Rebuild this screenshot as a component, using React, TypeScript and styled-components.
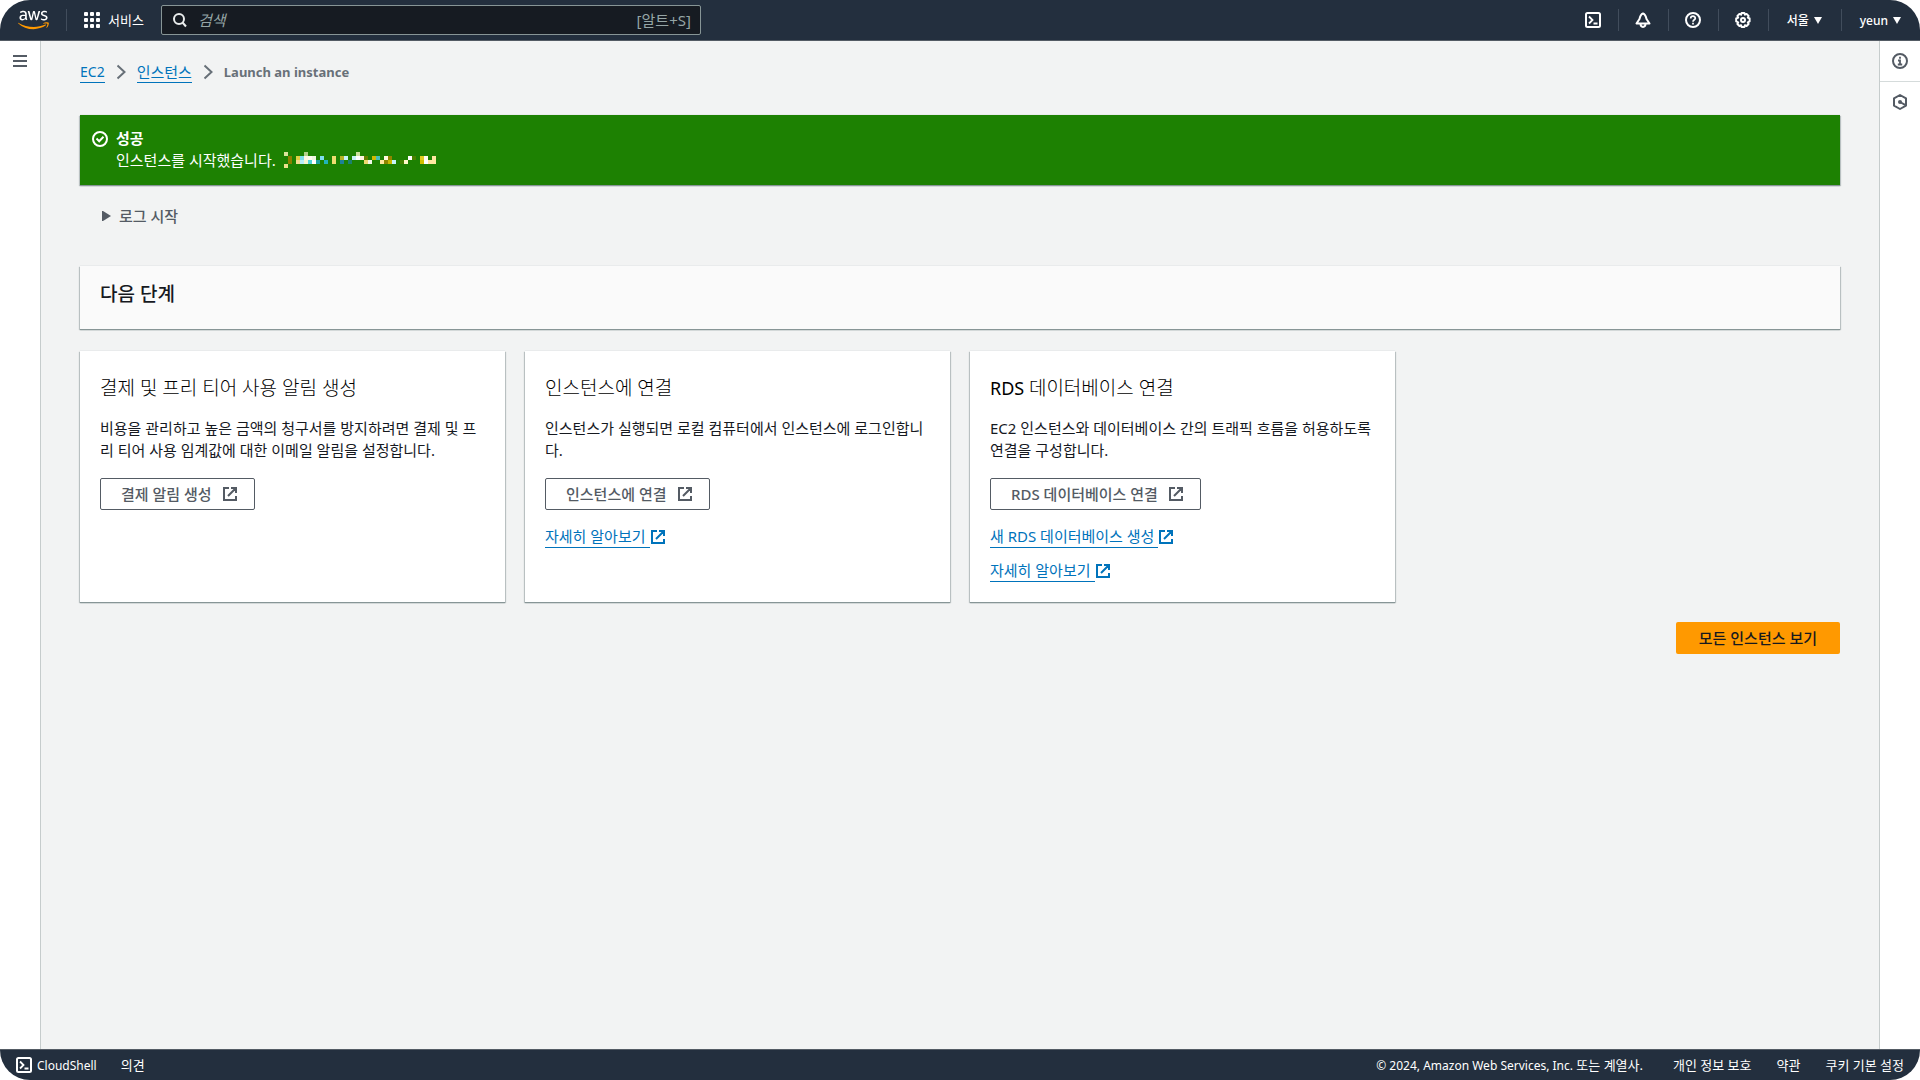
import React from "react";
import styled, { createGlobalStyle } from "styled-components";

const sans = '"Noto Sans", "Noto Sans CJK KR", sans-serif';

const GlobalStyle = createGlobalStyle`
  *, *::before, *::after { box-sizing: border-box; }
  body { margin: 0; background: #ffffff; }
  button, input { font-family: inherit; }
`;

const Shell = styled.div`
  min-height: 100vh;
  display: flex;
  flex-direction: column;
  overflow: hidden;
  border-radius: 30px;
  background: #ffffff;
  color: #16191f;
  font-family: ${sans};
  font-size: 15px;
  line-height: 22px;
`;

/* ---------- top bar ---------- */

const TopBar = styled.header`
  display: flex;
  align-items: center;
  height: 41px;
  background: #232f3e;
  border-bottom: 1px solid #545b64;
  color: #ffffff;
  font-size: 12px;
`;

const LogoLink = styled.a`
  display: flex;
  padding: 0 17px 0 18px;
`;

const Divider = styled.span`
  width: 1px;
  height: 22px;
  background: #414d5c;
`;

const ServicesButton = styled.button`
  display: flex;
  align-items: center;
  gap: 8px;
  padding: 0 17px;
  border: 0;
  background: none;
  color: #ffffff;
  font-size: 13px;
  line-height: 20px;
`;

const SearchBox = styled.label`
  display: flex;
  align-items: center;
  gap: 11px;
  flex: 0 1 540px;
  height: 30px;
  padding: 0 9px;
  border: 1px solid #879596;
  border-radius: 2px;
  background: #161b22;
  color: #95a5a6;
  font-size: 15px;
`;

const SearchInput = styled.input`
  flex: 1;
  min-width: 0;
  padding: 0;
  border: 0;
  outline: 0;
  background: none;
  color: #ffffff;
  font-size: 15px;
  &::placeholder {
    color: #95a5a6;
    font-style: italic;
    opacity: 1;
  }
`;

const TopTools = styled.nav`
  display: flex;
  align-items: center;
  margin-left: auto;
`;

const IconButton = styled.button`
  display: flex;
  align-items: center;
  justify-content: center;
  width: 49px;
  height: 40px;
  padding: 0;
  border: 0;
  background: none;
  color: #ffffff;
`;

const MenuButton = styled.button`
  display: flex;
  align-items: center;
  gap: 5px;
  height: 40px;
  padding: 0 19px 0 18px;
  border: 0;
  background: none;
  color: #ffffff;
  font-size: 12px;
  font-weight: 500;
`;

/* ---------- body ---------- */

const Body = styled.div`
  flex: 1;
  display: flex;
`;

const Rail = styled.aside<{ $side: "left" | "right" }>`
  display: flex;
  flex-direction: column;
  width: 41px;
  border: 0 solid #c6cccc;
  ${(p) => (p.$side === "left" ? "border-right-width: 1px;" : "border-left-width: 1px;")}
`;

const RailButton = styled.button<{ $ruled?: boolean }>`
  display: flex;
  align-items: center;
  justify-content: center;
  height: ${(p) => (p.$ruled ? "41px" : "40px")};
  padding: 0;
  border: 0;
  border-bottom: ${(p) => (p.$ruled ? "1px solid #d5dbdb" : "0")};
  background: none;
  color: #545b64;
`;

const Main = styled.main`
  flex: 1;
  min-width: 0;
  padding: 20px 39px;
  background: #f2f3f3;
`;

const Crumbs = styled.ol`
  display: flex;
  align-items: center;
  gap: 11px;
  margin: 0 0 32px;
  padding: 0;
  list-style: none;
`;

const Crumb = styled.li`
  display: flex;
  align-items: center;
  gap: 11px;
  color: #687078;
  font-size: 13px;
  font-weight: 700;
`;

const CrumbLink = styled.a<{ $latin?: boolean }>`
  border-bottom: 1px solid #0073bb;
  color: #0073bb;
  font-size: ${(p) => (p.$latin ? "14px" : "15px")};
  font-weight: 400;
  line-height: 20px;
  text-decoration: none;
`;

const panelShadow =
  "0 1px 1px #879596, 1px 1px 1px #c3c9ca, -1px 1px 1px #c3c9ca, 0 -1px 0 #e9ebec";

const Flash = styled.section`
  display: flex;
  align-items: flex-start;
  gap: 8px;
  min-height: 70px;
  padding: 12px;
  background: #1d8102;
  box-shadow: ${panelShadow};
  color: #ffffff;
  svg { flex: none; }
`;

const FlashIcon = styled.span`
  display: flex;
  padding: 4px 0;
`;

const FlashTitle = styled.strong`
  display: block;
  font-weight: 700;
`;

const FlashText = styled.p`
  display: flex;
  align-items: center;
  gap: 8px;
  margin: 0;
`;

const LogToggle = styled.button`
  display: flex;
  align-items: center;
  gap: 8px;
  margin: 20px 0 39px;
  padding: 0 22px;
  border: 0;
  background: none;
  color: #545b64;
  font-size: 15px;
  font-weight: 500;
  line-height: 22px;
`;

const NextSteps = styled.div`
  padding: 17px 20px 24px;
  background: #fafafa;
  box-shadow: ${panelShadow};
`;

const NextTitle = styled.h2`
  margin: 0;
  font-size: 19px;
  font-weight: 500;
  line-height: 22px;
`;

const Cards = styled.div`
  display: grid;
  grid-template-columns: repeat(4, 1fr);
  gap: 20px;
  margin-top: 22px;
`;

const Card = styled.article`
  display: flex;
  flex-direction: column;
  align-items: flex-start;
  gap: 12px;
  padding: 26px 20px 20px;
  background: #ffffff;
  box-shadow: ${panelShadow};
`;

const CardTitle = styled.h3`
  margin: 0 0 6px;
  color: #000000;
  font-size: 19px;
  font-weight: 300;
  line-height: 22px;
`;

const Latin = styled.span`
  font-size: 18px;
  font-weight: 400;
`;

const CardText = styled.p`
  margin: 0 0 5px;
  word-break: break-all;
`;

const LinkButton = styled.button`
  display: flex;
  align-items: center;
  gap: 10px;
  height: 32px;
  margin-bottom: 4px;
  padding: 0 16px 0 20px;
  border: 1px solid #545b64;
  border-radius: 2px;
  background: #ffffff;
  color: #545b64;
  font-size: 15px;
  font-weight: 500;
  line-height: 22px;
`;

const DocLink = styled.a`
  display: flex;
  align-items: center;
  color: #0073bb;
  text-decoration: none;
`;

const DocLabel = styled.span`
  padding-right: 4px;
  border-bottom: 1px solid #0073bb;
  line-height: 21px;
`;

const Actions = styled.div`
  display: flex;
  justify-content: flex-end;
  margin-top: 20px;
`;

const PrimaryButton = styled.button`
  height: 32px;
  padding: 0 23px;
  border: 0;
  border-radius: 2px;
  background: #ff9900;
  color: #16191f;
  font-size: 15px;
  font-weight: 500;
  line-height: 22px;
`;

/* ---------- footer ---------- */

const Footer = styled.footer`
  display: flex;
  align-items: center;
  height: 31px;
  padding: 0 16px;
  background: #232f3e;
  border-top: 1px solid #545b64;
  color: #ffffff;
  font-size: 13px;
  line-height: 20px;
`;

const FooterShell = styled.button`
  display: flex;
  align-items: center;
  gap: 5px;
  margin-right: 24px;
  padding: 0;
  border: 0;
  background: none;
  color: #ffffff;
  font-size: 12px;
  font-weight: 400;
`;

const FooterLink = styled.a`
  color: #ffffff;
  text-decoration: none;
`;

const Legal = styled.div`
  display: flex;
  gap: 25px;
  margin-left: auto;
`;

const Copyright = styled.span`
  padding-right: 5px;
`;

const Holder = styled.span`
  font-size: 12px;
`;

/* ---------- icons ---------- */

const AwsLogo = () => (
  <svg width="31" height="20" viewBox="0 0 304 182" role="img" aria-label="aws">
    <path
      fill="#fff"
      d="M86.4 66.4c0 3.7.4 6.7 1.1 8.9.8 2.2 1.8 4.6 3.2 7.2.5.8.7 1.6.7 2.3 0 1-.6 2-1.9 3l-6.3 4.2c-.9.6-1.8.9-2.6.9-1 0-2-.5-3-1.4-1.4-1.5-2.6-3.1-3.6-4.7-1-1.7-2-3.6-3.1-5.9-7.8 9.2-17.6 13.8-29.4 13.8-8.4 0-15.1-2.4-20-7.2-4.9-4.8-7.4-11.2-7.4-19.2 0-8.5 3-15.4 9.1-20.6 6.1-5.2 14.2-7.8 24.5-7.8 3.4 0 6.9.3 10.6.8 3.7.5 7.5 1.3 11.5 2.2v-7.3c0-7.6-1.6-12.9-4.7-16-3.2-3.1-8.6-4.6-16.3-4.6-3.5 0-7.1.4-10.8 1.3-3.7.9-7.3 2-10.8 3.4-1.6.7-2.8 1.1-3.5 1.3-.7.2-1.2.3-1.6.3-1.4 0-2.1-1-2.1-3.1v-4.9c0-1.6.2-2.8.7-3.5.5-.7 1.4-1.4 2.8-2.1 3.5-1.8 7.7-3.3 12.6-4.5 4.9-1.3 10.1-1.9 15.6-1.9 11.9 0 20.6 2.7 26.2 8.1 5.5 5.4 8.3 13.6 8.3 24.6v32.4zM45.8 81.6c3.3 0 6.7-.6 10.3-1.8 3.6-1.2 6.8-3.4 9.5-6.4 1.6-1.9 2.8-4 3.4-6.4.6-2.4 1-5.3 1-8.7v-4.2c-2.9-.7-6-1.3-9.2-1.7-3.2-.4-6.3-.6-9.4-.6-6.7 0-11.6 1.3-14.9 4-3.3 2.7-4.9 6.5-4.9 11.5 0 4.7 1.2 8.2 3.7 10.6 2.4 2.5 5.9 3.7 10.5 3.7zm80.3 10.8c-1.8 0-3-.3-3.8-1-.8-.6-1.5-2-2.1-3.9L96.7 10.2c-.6-2-.9-3.3-.9-4 0-1.6.8-2.5 2.4-2.5h9.8c1.9 0 3.2.3 3.9 1 .8.6 1.4 2 2 3.9l16.8 66.2 15.6-66.2c.5-2 1.1-3.3 1.9-3.9.8-.6 2.2-1 4-1h8c1.9 0 3.2.3 4 1 .8.6 1.5 2 1.9 3.9l15.8 67 17.3-67c.6-2 1.3-3.3 2-3.9.8-.6 2.1-1 3.9-1h9.3c1.6 0 2.5.8 2.5 2.5 0 .5-.1 1-.2 1.6-.1.6-.3 1.4-.7 2.5l-24.1 77.3c-.6 2-1.3 3.3-2.1 3.9-.8.6-2.1 1-3.8 1h-8.6c-1.9 0-3.2-.3-4-1-.8-.7-1.5-2-1.9-4L156 23l-15.4 64.4c-.5 2-1.1 3.3-1.9 4-.8.7-2.2 1-4 1zm128.5 2.7c-5.2 0-10.4-.6-15.4-1.8-5-1.2-8.9-2.5-11.5-4-1.6-.9-2.7-1.9-3.1-2.8-.4-.9-.6-1.900-.6-2.800v-5.100c0-2.100.8-3.100 2.300-3.100.6 0 1.200.1 1.800.3.6.2 1.500.6 2.500 1 3.400 1.500 7.100 2.700 11 3.500 4 .8 7.900 1.200 11.900 1.200 6.300 0 11.200-1.100 14.600-3.300 3.400-2.200 5.200-5.400 5.200-9.500 0-2.800-.9-5.100-2.700-7-1.800-1.900-5.200-3.600-10.100-5.200L246 52c-7.300-2.300-12.700-5.700-16-10.200-3.300-4.400-5-9.300-5-14.500 0-4.200.9-7.900 2.700-11.100 1.800-3.200 4.200-6 7.200-8.200 3-2.300 6.400-4 10.400-5.200 4-1.200 8.200-1.700 12.600-1.700 2.200 0 4.500.1 6.700.4 2.300.3 4.400.7 6.500 1.100 2 .5 3.900 1 5.700 1.600 1.800.6 3.200 1.200 4.200 1.800 1.400.8 2.400 1.600 3 2.500.6.8.9 1.900.9 3.300v4.700c0 2.100-.8 3.200-2.300 3.200-.8 0-2.100-.4-3.800-1.200-5.700-2.600-12.100-3.900-19.200-3.900-5.700 0-10.200.9-13.300 2.800-3.100 1.900-4.700 4.800-4.700 8.900 0 2.800 1 5.200 3 7.100 2 1.900 5.700 3.800 11 5.500l14.200 4.500c7.200 2.300 12.400 5.500 15.500 9.600 3.100 4.100 4.600 8.800 4.600 14 0 4.300-.9 8.200-2.600 11.600-1.800 3.400-4.200 6.400-7.300 8.800-3.100 2.500-6.800 4.300-11.100 5.600-4.500 1.400-9.200 2.100-14.300 2.100z"
    />
    <path
      fill="#f90"
      d="M273.5 143.7c-32.9 24.3-80.7 37.2-121.8 37.2-57.6 0-109.5-21.3-148.7-56.7-3.1-2.8-.3-6.6 3.4-4.4 42.4 24.6 94.7 39.5 148.8 39.5 36.5 0 76.6-7.6 113.5-23.2 5.5-2.5 10.2 3.6 4.8 7.6zm13.7-15.6c-4.2-5.4-27.8-2.6-38.5-1.3-3.2.4-3.7-2.4-.8-4.5 18.8-13.2 49.7-9.4 53.3-5 3.6 4.5-1 35.4-18.6 50.2-2.7 2.3-5.3 1.1-4.1-1.9 4-9.9 12.9-32.2 8.7-37.5z"
    />
  </svg>
);

const GridIcon = () => (
  <svg width="16" height="16" fill="#fff" aria-hidden="true">
    {[0, 6, 12].flatMap((y) =>
      [0, 6, 12].map((x) => <rect key={`${x}-${y}`} x={x} y={y} width="4" height="4" rx="1" />)
    )}
  </svg>
);

const SearchIcon = () => (
  <svg width="16" height="16" fill="none" stroke="#eaeded" strokeWidth="2" aria-hidden="true">
    <circle cx="8" cy="7" r="5" />
    <path d="M11.5 10.5 15 14.5" />
  </svg>
);

const TerminalIcon = () => (
  <svg width="16" height="16" fill="none" stroke="currentColor" strokeWidth="2" aria-hidden="true">
    <rect x="1" y="1" width="14" height="14" rx="1.5" />
    <path d="M4 4.5 7.5 8 4 11.5M8.5 11.5h4" strokeWidth="1.8" />
  </svg>
);

const BellIcon = () => (
  <svg width="16" height="16" fill="none" stroke="currentColor" strokeWidth="2" strokeLinejoin="round" aria-hidden="true">
    <path d="M8 1.5C5.5 2.5 5 4.5 4.5 7L1.5 11.5h13L11.5 7C11 4.5 10.5 2.5 8 1.5Z" />
    <path d="M5.5 11.5c0 4.5 5 4.5 5 0" />
  </svg>
);

const HelpIcon = () => (
  <svg width="16" height="16" fill="none" stroke="currentColor" strokeWidth="2" aria-hidden="true">
    <circle cx="8" cy="8" r="7" />
    <path d="M5.7 6.5C5.7 3.4 10.3 3.6 10.3 6.2 10.3 7.8 8 7.7 8 9.7M8 10.8v1.8" strokeWidth="1.7" />
  </svg>
);

const GearIcon = () => (
  <svg width="16" height="16" fill="none" stroke="currentColor" strokeWidth="2" strokeLinejoin="round" aria-hidden="true">
    <path d="M6.6 1h2.8l.5 1.7 1.7-.8 2 2-.8 1.7 1.8.9v2.9l-1.8.9.8 1.7-2 2-1.7-.8L9.4 15H6.6l-.5-1.8-1.7.8-2-2 .8-1.7L1.2 9.4V6.5l2-.9-.8-1.700 2-2 1.700.8Z" />
    <circle cx="8" cy="8" r="2" />
  </svg>
);

const CaretIcon = () => (
  <svg width="8" height="7" fill="currentColor" aria-hidden="true">
    <path d="M0 0h8L4 7Z" />
  </svg>
);

const MenuIcon = () => (
  <svg width="16" height="16" fill="none" stroke="currentColor" strokeWidth="2" aria-hidden="true">
    <path d="M1 3h14M1 8h14M1 13h14" />
  </svg>
);

const InfoIcon = () => (
  <svg width="16" height="16" fill="none" stroke="currentColor" strokeWidth="2" aria-hidden="true">
    <circle cx="8" cy="8" r="7" />
    <path d="M8 3.8v2M6 7.5h2v4M5.8 11.5h4.4" strokeWidth="1.8" />
  </svg>
);

const HexIcon = () => (
  <svg width="16" height="16" fill="none" stroke="currentColor" strokeWidth="2" strokeLinejoin="round" aria-hidden="true">
    <path d="M8 1 14 4.4v7.2L8 15l-6-3.4V4.4Z" />
    <circle cx="8" cy="8" r="2" fill="currentColor" stroke="none" />
    <path d="m8 8 5.5 3.2" />
  </svg>
);

const ChevronIcon = () => (
  <svg width="10" height="16" fill="none" stroke="#687078" strokeWidth="2" aria-hidden="true">
    <path d="m1.5 1.5 7 6.5-7 6.5" />
  </svg>
);

const CheckIcon = () => (
  <svg width="16" height="16" fill="none" stroke="currentColor" strokeWidth="2" aria-hidden="true">
    <circle cx="8" cy="8" r="7" />
    <path d="m4.5 7.5 2.7 2.7 4.3-4.5" />
  </svg>
);

const TriangleIcon = () => (
  <svg width="9" height="10" fill="currentColor" aria-hidden="true">
    <path d="M0 0h1l8 5-8 5H0Z" />
  </svg>
);

const ExternalIcon = () => (
  <svg width="16" height="16" fill="none" stroke="currentColor" strokeWidth="2" aria-hidden="true">
    <path d="M7 2H2v12h12V10M9 2h5v5M14 2 6 10" />
  </svg>
);

/* Redacted instance id: [column, row, colour] of each 4px block. */
const blocks: [number, number, string][] = [
  [0, 0, "#dbe39b"], [5, 0, "#b4d08b"], [18, 0, "#cbe09d"],
  [1, 1, "#8a8100"], [3, 1, "#e0cf45"], [4, 1, "#7fe0ea"], [5, 1, "#fff8e6"], [6, 1, "#fffdf0"], [7, 1, "#f0f8e0"],
  [9, 1, "#80def0"], [12, 1, "#efdc70"], [14, 1, "#b3b425"], [15, 1, "#c4f5fa"], [17, 1, "#c6f3f5"],
  [18, 1, "#ffffff"], [19, 1, "#fff6e4"], [20, 1, "#648100"], [22, 1, "#d0ba00"], [23, 1, "#45bdb8"],
  [25, 1, "#fffbe0"], [26, 1, "#8f8600"], [31, 1, "#ffffff"], [32, 1, "#4a8100"], [34, 1, "#dfce20"],
  [35, 1, "#fffdf0"], [37, 1, "#ffe8a0"],
  [1, 2, "#8a8100"], [3, 2, "#f5dc90"], [4, 2, "#b8eef8"], [5, 2, "#f7f5d0"], [6, 2, "#4fd4d8"], [7, 2, "#ffffff"],
  [8, 2, "#1ca3a0"], [10, 2, "#22b4b8"], [12, 2, "#efdc70"], [14, 2, "#1d8298"], [16, 2, "#1d8170"],
  [20, 2, "#eed870"], [21, 2, "#f0f8e8"], [24, 2, "#ffe89c"], [25, 2, "#8f8600"], [26, 2, "#c8b900"],
  [27, 2, "#c4f4fa"], [29, 2, "#428100"], [30, 2, "#fff8c8"], [34, 2, "#cfc000"], [35, 2, "#ffffff"],
  [36, 2, "#ffe8a0"], [37, 2, "#ffe8a0"],
  [0, 3, "#eee08d"],
];

const RedactedId = () => (
  <svg width="152" height="16" shapeRendering="crispEdges" aria-hidden="true">
    {blocks.map(([c, r, fill]) => (
      <rect key={`${c}-${r}`} x={c * 4} y={r * 4} width="4" height="4" fill={fill} />
    ))}
  </svg>
);

/* ---------- page ---------- */

const steps = [
  {
    title: "결제 및 프리 티어 사용 알림 생성",
    text: "비용을 관리하고 높은 금액의 청구서를 방지하려면 결제 및 프리 티어 사용 임계값에 대한 이메일 알림을 설정합니다.",
    action: "결제 알림 생성",
    links: [],
  },
  {
    title: "인스턴스에 연결",
    text: "인스턴스가 실행되면 로컬 컴퓨터에서 인스턴스에 로그인합니다.",
    action: "인스턴스에 연결",
    links: ["자세히 알아보기"],
  },
  {
    product: "RDS",
    title: "데이터베이스 연결",
    text: "EC2 인스턴스와 데이터베이스 간의 트래픽 흐름을 허용하도록 연결을 구성합니다.",
    action: "RDS 데이터베이스 연결",
    links: ["새 RDS 데이터베이스 생성", "자세히 알아보기"],
  },
];

const tools = [
  { label: "CloudShell", Icon: TerminalIcon },
  { label: "알림", Icon: BellIcon },
  { label: "도움말", Icon: HelpIcon },
  { label: "설정", Icon: GearIcon },
];

export default function App() {
  return (
    <>
      <GlobalStyle />
      <Shell lang="ko">
        <TopBar>
          <LogoLink href="#home">
            <AwsLogo />
          </LogoLink>
          <Divider />
          <ServicesButton>
            <GridIcon />
            서비스
          </ServicesButton>
          <SearchBox>
            <SearchIcon />
            <SearchInput type="text" placeholder="검색" aria-label="검색" />
            <span>[알트+S]</span>
          </SearchBox>
          <TopTools>
            {tools.map(({ label, Icon }) => (
              <React.Fragment key={label}>
                <IconButton aria-label={label}>
                  <Icon />
                </IconButton>
                <Divider />
              </React.Fragment>
            ))}
            <MenuButton>
              서울
              <CaretIcon />
            </MenuButton>
            <Divider />
            <MenuButton>
              yeun
              <CaretIcon />
            </MenuButton>
          </TopTools>
        </TopBar>

        <Body>
          <Rail $side="left">
            <RailButton aria-label="탐색 열기">
              <MenuIcon />
            </RailButton>
          </Rail>

          <Main>
            <nav aria-label="이동 경로">
              <Crumbs>
                <Crumb>
                  <CrumbLink $latin href="#ec2">EC2</CrumbLink>
                  <ChevronIcon />
                </Crumb>
                <Crumb>
                  <CrumbLink href="#instances">인스턴스</CrumbLink>
                  <ChevronIcon />
                </Crumb>
                <Crumb aria-current="page">Launch an instance</Crumb>
              </Crumbs>
            </nav>

            <Flash role="status">
              <FlashIcon>
                <CheckIcon />
              </FlashIcon>
              <div>
                <FlashTitle>성공</FlashTitle>
                <FlashText>
                  인스턴스를 시작했습니다.
                  <RedactedId />
                </FlashText>
              </div>
            </Flash>

            <LogToggle aria-expanded="false">
              <TriangleIcon />
              로그 시작
            </LogToggle>

            <NextSteps>
              <NextTitle>다음 단계</NextTitle>
            </NextSteps>

            <Cards>
              {steps.map((step) => (
                <Card key={step.title}>
                  <CardTitle>
                    {step.product && <Latin>{step.product} </Latin>}
                    {step.title}
                  </CardTitle>
                  <CardText>{step.text}</CardText>
                  <LinkButton>
                    {step.action}
                    <ExternalIcon />
                  </LinkButton>
                  {step.links.map((label) => (
                    <DocLink key={label} href="#learn">
                      <DocLabel>{label}</DocLabel>
                      <ExternalIcon />
                    </DocLink>
                  ))}
                </Card>
              ))}
            </Cards>

            <Actions>
              <PrimaryButton>모든 인스턴스 보기</PrimaryButton>
            </Actions>
          </Main>

          <Rail $side="right">
            <RailButton $ruled aria-label="정보">
              <InfoIcon />
            </RailButton>
            <RailButton aria-label="진단">
              <HexIcon />
            </RailButton>
          </Rail>
        </Body>

        <Footer>
          <FooterShell>
            <TerminalIcon />
            CloudShell
          </FooterShell>
          <FooterLink href="#feedback">의견</FooterLink>
          <Legal>
            <Copyright>
              <Holder>© 2024, Amazon Web Services, Inc.</Holder> 또는 계열사.
            </Copyright>
            <FooterLink href="#privacy">개인 정보 보호</FooterLink>
            <FooterLink href="#terms">약관</FooterLink>
            <FooterLink href="#cookies">쿠키 기본 설정</FooterLink>
          </Legal>
        </Footer>
      </Shell>
    </>
  );
}
